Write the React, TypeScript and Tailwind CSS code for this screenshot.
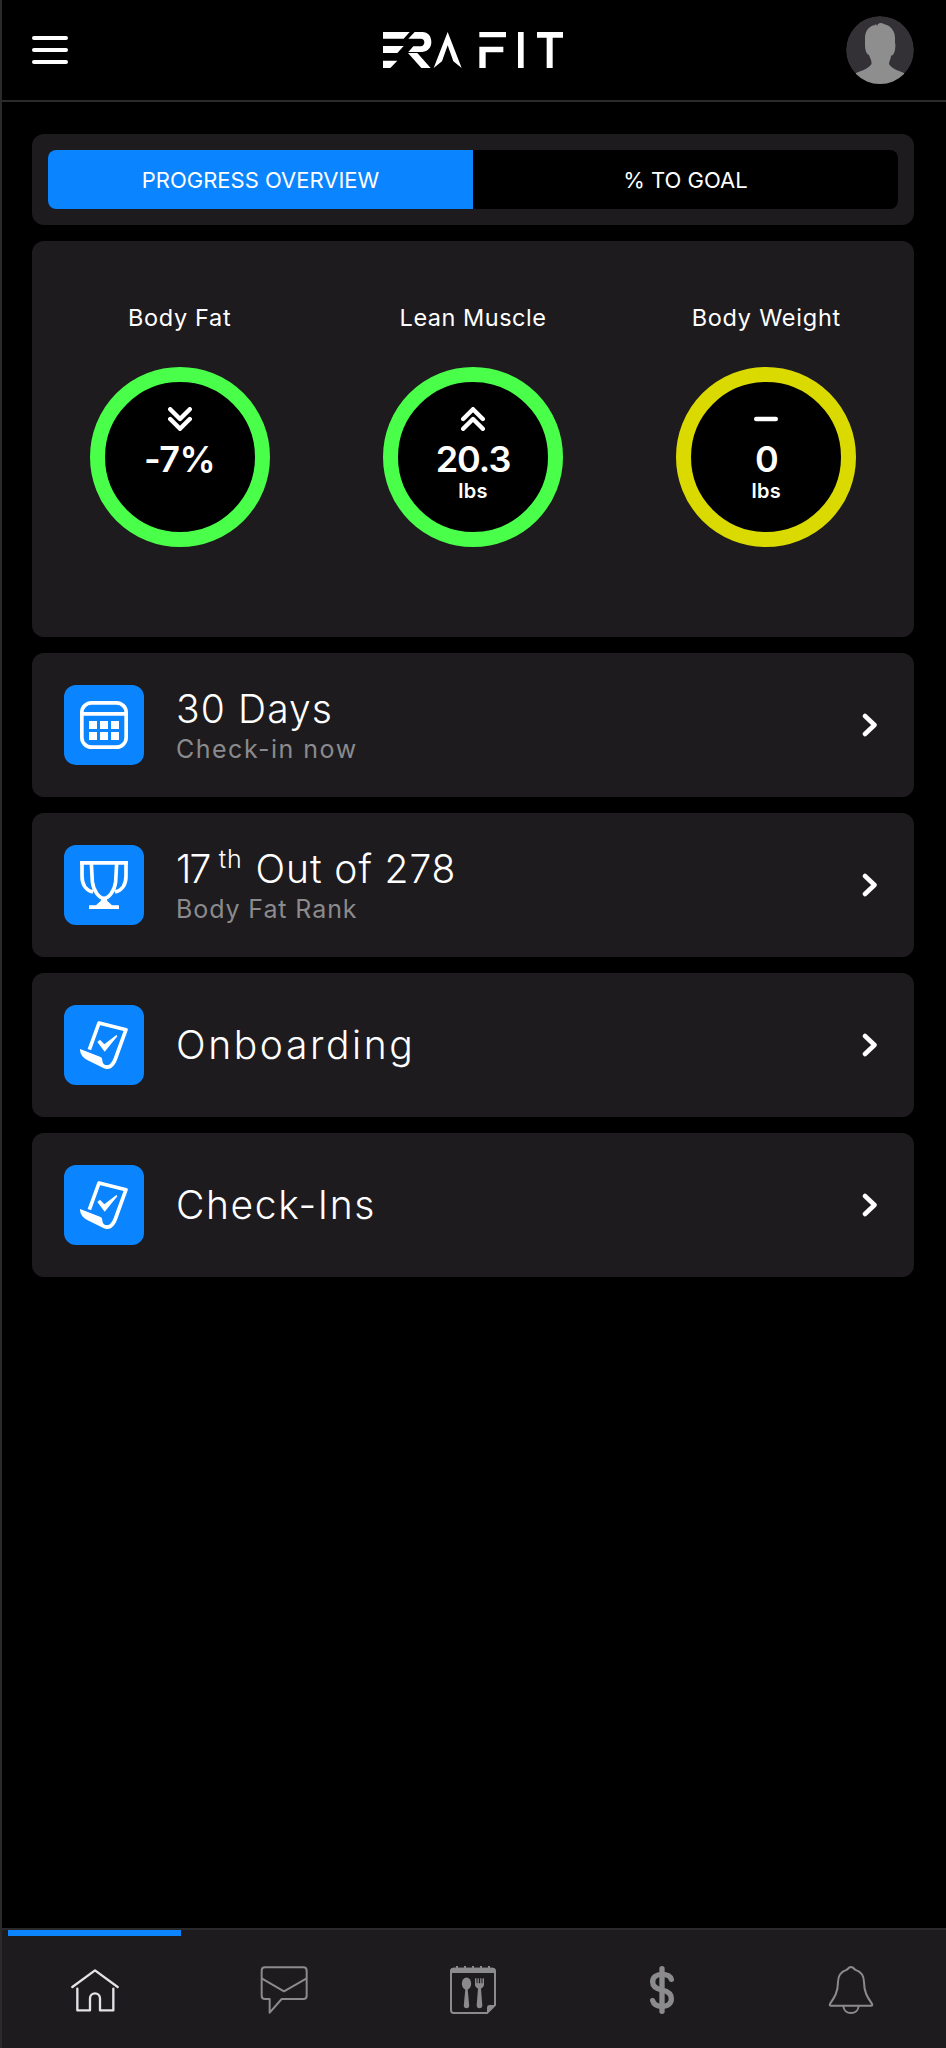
import type { ReactNode } from "react";

function Logo() {
  return (
    <svg className="h-[36px] w-[180px]" viewBox="69 66 540 108" fill="#fff" role="img" aria-label="Era Fit">
      <path d="M69 66H149L131 86H69Z" />
      <path d="M69 108H131L112 129H69Z" />
      <path d="M69 152H112L91 174H69Z" />
      <path d="M164 66H187C204 66 214 79 214 96C214 113 204 124 187 126H145L160 109H182C189 109 193 104 193 97C193 90 189 86 182 86H145Z" />
      <path d="M144 129H172L212 174H184Z" />
      <path d="M263 66L305 174L280 154L263 106L246 154L221 174Z" />
      <path d="M358 66H438V82H358Z M358 110H430V127H377V174H358Z" />
      <path d="M474 66H491V174H474Z" />
      <path d="M531 66H609V83H578V174H560V83H531Z" />
    </svg>
  );
}

function Avatar() {
  return (
    <svg className="size-[68px] rounded-full" viewBox="0 0 68 68">
      <circle cx="34" cy="34" r="34" fill="#333135" />
      <path
        fill="#8e8e8e"
        d="M34 7C37 7 40 9 43 10C47 13 49 17 49 22V27C50 29 49 32 49 34C48 38 47 39 45 40C45 43 43 45 43 48C46 53 51 54 58 57V68H10V57C17 54 22 53 25.500 48C26 45 24 42 23 39C20 38 19 33 19 29V22C19 15 23 10 29 9L30 8L31 10L32 8Z"
      />
    </svg>
  );
}

function IconCalendar() {
  return (
    <svg className="size-12" viewBox="0 0 144 144" fill="#fff">
      <rect x="5.500" y="5.500" width="133" height="133" rx="29" fill="none" stroke="#fff" strokeWidth="11" />
      <path d="M6 33H138V44H6Z" />
      <path d="M27 60h24v24h-24zM60 60h24v24h-24zM93 60h24v24h-24zM27 93h24v24h-24zM60 93h24v24h-24zM93 93h24v24h-24z" />
    </svg>
  );
}

function IconTrophy() {
  return (
    <svg className="size-12" viewBox="0 0 144 144" fill="none" stroke="#fff" strokeWidth="11">
      <path d="M0 5.500H144" />
      <path d="M6 6V45C6 73 20 89 39 93M138 6V45C138 73 124 89 105 93" />
      <path d="M34 6L37 62C40 90 58 112 72 112C86 112 104 90 107 62L110 6" />
      <path d="M64 112H80L82 120L96 133H117V144H27V133H48L62 120Z" fill="#fff" stroke="none" />
    </svg>
  );
}

function IconChecklist() {
  return (
    <svg className="size-12" viewBox="0 0 144 144" fill="#fff">
      <path
        d="M28 86L57 6L138 26L106 114C101 128 93 139 78 139"
        fill="none"
        stroke="#fff"
        strokeWidth="11"
        strokeLinejoin="round"
      />
      <path d="M0 84L60 107C67 109 66 113 67 119C68 127 72 132 82 133V144C76 144 70 141 64 138L20 116C7 109 0 97 0 84Z" />
      <path d="M52 63L60 56L73 70L109 42L112 46L74 92Z" />
    </svg>
  );
}

function ChevronRight() {
  return (
    <svg className="ml-auto mr-1 h-6 w-4 shrink-0" viewBox="0 0 16 24" fill="none" stroke="#fff" strokeWidth="4.500" strokeLinecap="round" strokeLinejoin="round">
      <path d="M3 3L12.500 12L3 21" />
    </svg>
  );
}

const trendPaths = {
  down: "M2.200 2.200L12 12L21.800 2.200M2.200 12L12 21.800L21.800 12",
  up: "M2.200 12L12 2.200L21.800 12M2.200 21.800L12 12L21.800 21.800",
  flat: "M2.200 12H21.800",
};

type MetricProps = {
  label: string;
  labelClass: string;
  value: string;
  valueClass: string;
  unit?: string;
  trend: keyof typeof trendPaths;
  ring: string;
};

function Metric({ label, labelClass, value, valueClass, unit, trend, ring }: MetricProps) {
  return (
    <div className="flex flex-col items-center">
      <div className={`text-[23.500px] leading-9 whitespace-nowrap ${labelClass}`}>{label}</div>
      <div className={`mt-[31px] flex size-[180px] flex-col items-center rounded-full border-[15px] bg-black pt-[25px] ${ring}`}>
        <svg className="size-6 shrink-0" viewBox="0 0 24 24" fill="none" stroke="#fff" strokeWidth="4.400" strokeLinecap="round" strokeLinejoin="round">
          <path d={trendPaths[trend]} />
        </svg>
        <div className={`mt-2 text-[36px] leading-10 font-semibold whitespace-nowrap ${valueClass}`}>{value}</div>
        {unit && <div className="text-[20px] leading-6 font-semibold tracking-[0.3px]">{unit}</div>}
      </div>
    </div>
  );
}

type RowProps = { icon: ReactNode; title: ReactNode; titleClass: string; sub?: string; subClass?: string };

function Row({ icon, title, titleClass, sub, subClass = "" }: RowProps) {
  return (
    <div className="flex h-36 items-center rounded-xl bg-[#1d1b1e] px-8">
      <div className="flex size-20 shrink-0 items-center justify-center rounded-xl bg-[#0a84ff]">{icon}</div>
      <div className="ml-8 whitespace-nowrap">
        <div className={`text-[39px] leading-[48px] font-light ${titleClass}`}>{title}</div>
        {sub && <div className={`text-[25px] leading-8 text-[#8b8a8c] ${subClass}`}>{sub}</div>}
      </div>
      <ChevronRight />
    </div>
  );
}

function NavHome() {
  return (
    <svg className="size-12" viewBox="0 0 144 144" fill="none" stroke="#e4e2e5" strokeWidth="7" strokeLinecap="round" strokeLinejoin="round">
      <path d="M4 63L72 13L140 63" />
      <path d="M19 68V133H57V97A15 15 0 0 1 87 97V133H127V68" />
    </svg>
  );
}

function NavMessages() {
  return (
    <svg className="size-12" viewBox="0 0 144 144" fill="none" stroke="#8b8a8c" strokeWidth="6" strokeLinejoin="round">
      <path d="M15 4H130Q140 4 140 14V89Q140 99 130 99H65L29 140V99H15Q5 99 5 89V14Q5 4 15 4Z" />
      <path d="M5 37L72 76L140 37" />
    </svg>
  );
}

function NavMeals() {
  return (
    <svg className="size-12" viewBox="0 0 144 144" fill="#8b8a8c">
      <path d="M114 141H14Q6 141 6 133V16Q6 8 14 8H130Q138 8 138 16V117Z" fill="none" stroke="#8b8a8c" strokeWidth="6" />
      <path d="M4 21V15Q4 5 14 5H130Q140 5 140 15V21Z" />
      <path d="M21 0h6v8h-6zM45 0h6v8h-6zM69 0h6v8h-6zM93 0h6v8h-6zM117 0h6v8h-6z" />
      <path d="M114 143V125Q114 117 122 117H140Z" />
      <ellipse cx="52.500" cy="53" rx="14" ry="18.500" />
      <path d="M49 68H56L60.500 118Q61 127 52.500 127Q44 127 44.500 118Z" />
      <path d="M78 38Q80 34 82.500 38V52H85.500V38Q87.500 34 89.500 38V52H93.500V38Q95.500 34 97.500 38V52H100.500V38Q103 34 105 38V57Q104 65 96 68L100 118Q100 127 91.500 127Q83 127 83 118L87 68Q79 65 78 57Z" />
    </svg>
  );
}

function NavPayments() {
  return (
    <svg className="size-12" viewBox="0 0 144 144" fill="none" stroke="#8b8a8c" strokeWidth="16" strokeLinecap="round">
      <path d="M72 8V136" />
      <path d="M100 40C97 29 87 25 72 25C55 25 44 34 44 48C44 62 54 68 72 72C91 76 100 84 100 98C100 112 90 121 72 121C56 121 47 115 44 104" />
    </svg>
  );
}

function NavAlerts() {
  return (
    <svg className="size-12" viewBox="0 0 144 144" fill="none" stroke="#8b8a8c" strokeWidth="6" strokeLinejoin="round">
      <path d="M72 3C66 3 63 8 60 11C42 17 33 28 33 48C33 80 21 96 10 112Q6 119 11 119H133Q138 119 134 112C123 96 111 80 111 48C111 28 102 17 84 11C81 8 78 3 72 3Z" />
      <path d="M49 120C50 133 60 141 72 141C84 141 94 133 95 120" />
    </svg>
  );
}

const navItems = [NavHome, NavMessages, NavMeals, NavPayments, NavAlerts];

export default function App() {
  return (
    <div className="relative flex h-[2048px] w-[946px] flex-col overflow-hidden bg-black font-['Inter','Liberation_Sans',sans-serif] text-white">
      <header className="grid h-[102px] shrink-0 grid-cols-3 items-center border-b-2 border-[#2a2a2c] px-8">
        <button className="flex w-9 flex-col gap-2" aria-label="Menu">
          <span className="h-1 w-9 rounded-full bg-white" />
          <span className="h-1 w-9 rounded-full bg-white" />
          <span className="h-1 w-9 rounded-full bg-white" />
        </button>
        <div className="flex justify-center">
          <Logo />
        </div>
        <div className="flex justify-end">
          <Avatar />
        </div>
      </header>

      <main className="flex flex-1 flex-col gap-4 px-8 pt-8">
        <div className="h-[91px] rounded-xl bg-[#1d1b1e] p-4">
          <div className="grid h-[59px] grid-cols-2 overflow-hidden rounded-lg bg-black text-[22px]">
            <button className="bg-[#0a84ff] pt-0.5">PROGRESS OVERVIEW</button>
            <button className="pt-0.5">% TO GOAL</button>
          </div>
        </div>

        <section className="grid h-[396px] grid-cols-3 rounded-xl bg-[#1d1b1e] px-px pt-[59px]">
          <Metric label="Body Fat" labelClass="tracking-[0.65px]" value="-7%" valueClass="tracking-[-0.5px]" trend="down" ring="border-[#4aff4a]" />
          <Metric label="Lean Muscle" labelClass="tracking-[0.5px]" value="20.3" valueClass="tracking-[-1px]" unit="lbs" trend="up" ring="border-[#4aff4a]" />
          <Metric label="Body Weight" labelClass="tracking-[0.75px]" value="0" valueClass="tracking-[-1px]" unit="lbs" trend="flat" ring="border-[#dada00]" />
        </section>

        <Row icon={<IconCalendar />} title="30 Days" titleClass="tracking-[1.1px]" sub="Check-in now" subClass="tracking-[1.5px]" />
        <Row
          icon={<IconTrophy />}
          title={
            <>
              <span className="tracking-[-1.8px]">17 </span>
              <span className="mr-px align-[15px] text-[25px] leading-[0]">th</span> Out of 278
            </>
          }
          titleClass="tracking-[0.9px]"
          sub="Body Fat Rank"
          subClass="tracking-[0.9px]"
        />
        <Row icon={<IconChecklist />} title="Onboarding" titleClass="tracking-[2.6px]" />
        <Row icon={<IconChecklist />} title="Check-Ins" titleClass="tracking-[1.6px]" />
      </main>

      <nav className="grid h-[120px] shrink-0 grid-cols-5 border-t-2 border-[#2a2a2c] bg-[#1d1b1e]">
        {navItems.map((Icon, i) => (
          <button key={i} className="flex flex-col items-center">
            <span className={i === 0 ? "h-1.5 w-[173px] bg-[#0a84ff]" : "h-1.5 w-[173px]"} />
            <span className="mt-[30px]">
              <Icon />
            </span>
          </button>
        ))}
      </nav>
      <div className="absolute inset-y-0 left-0 w-0.5 bg-[#2a2a2c]" />
    </div>
  );
}
